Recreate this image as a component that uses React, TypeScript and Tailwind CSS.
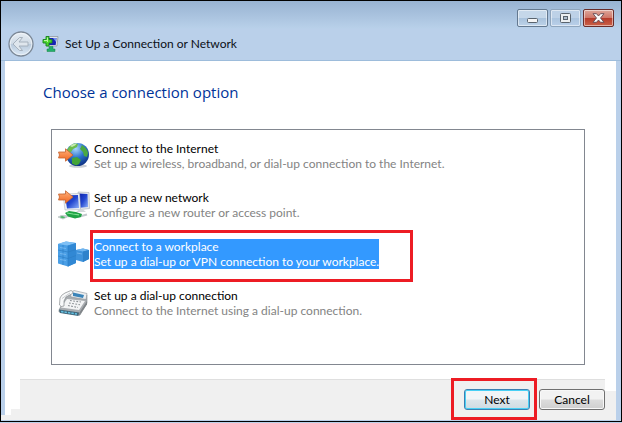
import type { ReactNode } from "react";

function Arrow({ y }: { y: number }) {
  return (
    <path
      transform={`translate(1 ${y})`}
      d="M.5 4h7V.8L15 7l-7.500 6.200V10h-7l1-3z"
      fill="url(#orange)"
      stroke="#c4622f"
      strokeWidth=".8"
      strokeLinejoin="round"
    />
  );
}

function GlobeIcon() {
  return (
    <svg width="34" height="34" viewBox="0 0 34 34" className="shrink-0" aria-hidden="true">
      <defs>
        <linearGradient id="orange" x1="0" y1="0" x2="0" y2="1">
          <stop offset="0" stopColor="#ffb27c" />
          <stop offset="1" stopColor="#f0641e" />
        </linearGradient>
        <radialGradient id="sea" cx=".42" cy=".25" r=".8">
          <stop offset="0" stopColor="#a9d8fb" />
          <stop offset=".5" stopColor="#2b72cc" />
          <stop offset="1" stopColor="#0b2a7c" />
        </radialGradient>
      </defs>
      <ellipse cx="21" cy="27" rx="9" ry="1.800" fill="#c9ced4" />
      <circle cx="20.500" cy="15.500" r="11.500" fill="url(#sea)" />
      <path d="M10 12q1-5 7-7.500l4 .5-1 3-4 2-2 3-4 2z" fill="#6cbd4c" />
      <path d="M13 7q3-3 7-2.500l-2 2-3 1.500z" fill="#c5ebb0" />
      <path d="M25 6q5 3 6 8l-1 4-3-1-1-4-3-3z" fill="#4aa843" />
      <path d="M15 19l5-1 4 3-2 4-3 1.500-4-2z" fill="#43a437" />
      <Arrow y={9} />
    </svg>
  );
}

function NetworkIcon() {
  return (
    <svg width="34" height="34" viewBox="0 0 34 34" className="shrink-0" aria-hidden="true">
      <defs>
        <linearGradient id="screen" x1="0" y1="0" x2="1" y2="1">
          <stop offset="0" stopColor="#0b1fa8" />
          <stop offset=".5" stopColor="#2448d0" />
          <stop offset="1" stopColor="#8fb2fa" />
        </linearGradient>
      </defs>
      <path d="M21 4l11 .5.500 16-9 1z" fill="#e6e9ed" stroke="#a7aeb6" strokeWidth=".6" />
      <path d="M22 5.500l8.500.5.500 13-8 .8z" fill="url(#screen)" />
      <path d="M6 6l16.500-.5 1 16-15.500.5z" fill="#eef1f4" stroke="#b2b9c0" strokeWidth=".6" />
      <path d="M8 7.500l13-.5 1 13-12 .5z" fill="url(#screen)" />
      <path d="M22 21.500h4l3 2.500h-10z" fill="#d3d7db" />
      <path d="M3 28.500l8-.5 10 1 9-2.500" stroke="#c3c8cd" strokeWidth="2" fill="none" />
      <path d="M8 25l4-2 7 1 6 2-1 3-6 1.500-7-2z" fill="#1fa345" />
      <path d="M10 25l6 1 6 .8" stroke="#7fe092" strokeWidth="1.200" fill="none" />
      <path d="M1 29l4-1.500 5 1.500-4 2z" fill="#4cb868" stroke="#c9ced2" strokeWidth="1" />
      <Arrow y={2} />
    </svg>
  );
}

function ServerIcon() {
  return (
    <svg width="34" height="34" viewBox="0 0 34 34" className="shrink-0" aria-hidden="true">
      <path d="M19 13l7-1.500 6 1.500v9l-6 3-7-2z" fill="#3f93dc" />
      <path d="M19 13l7-1.500 6 1.500-6 1.500z" fill="#70b5ef" />
      <path d="M26 14.500l6-1.500v9l-6 3z" fill="#2f82cb" />
      <path d="M1 7l8-2.500 10 1.500v20l-8 3.500-10-3z" fill="#4a9fe6" />
      <path d="M1 7l8-2.500 10 1.500-8 2.500z" fill="#7fc0f5" />
      <path d="M11 8.500l8-2.500v20l-8 3.500z" fill="#3188d4" />
      <path d="M1 13l10 2 8-2.500M1 19l10 2.500 8-3M11 8.500v21M6 8v20" fill="none" stroke="#2d7ec6" strokeWidth=".7" />
      <path d="M3 10.500l6 1M3 16.500l6 1M3 22.500l6 1M20 16l5 1" fill="none" stroke="#7cbdf3" strokeWidth=".8" />
    </svg>
  );
}

function PhoneIcon() {
  return (
    <svg width="34" height="34" viewBox="0 0 34 34" className="shrink-0" aria-hidden="true">
      <path d="M2 24l6-12 7-6 15 3v8l-7 12-21-3z" fill="#a9adb1" stroke="#85898d" strokeWidth=".6" />
      <path d="M13 7l4-2.500L30 7.500l-1 6-15-2.500z" fill="#eceef0" stroke="#8e9296" strokeWidth=".6" />
      <path d="M16 6.500l11 2.500-1 3-10-2z" fill="#3b84b8" />
      <path d="M10 13l18 2-6 9-18-2.500z" fill="#f3f4f5" />
      <path d="M13 14.500l11 1.500M12 17l11 1.800M11 19.500l10 2" stroke="#8d9297" strokeWidth="1.100" strokeDasharray="1.800 1.400" />
      <path d="M3 12q1-3 5-5l6-2.500q3 .5 1.500 3L9 11l-2 4v5q-3 1.500-4.500-1z" fill="#f8f9fa" stroke="#85898d" strokeWidth=".7" />
      <path d="M5 12.500l8-5.500" stroke="#c8ccd0" strokeWidth="1" />
      <path d="M2 23.500l20 3-.5 3.500L3 27z" fill="#3f6478" />
      <path d="M4 25.500l16 2.500" stroke="#63bfe0" strokeWidth="1.600" strokeDasharray="2.500 1" />
      <path d="M22.500 26.500L30 15v3.500L22 30z" fill="#7f8488" />
    </svg>
  );
}

function SetupIcon() {
  return (
    <svg width="17" height="18" viewBox="0 0 17 18" className="shrink-0" aria-hidden="true">
      <path d="M5 1.500h11l-1 9.500H5z" fill="#e1e6ea" stroke="#8f99a2" strokeWidth=".8" />
      <path d="M7 3h7.500l-.8 7H7z" fill="#1723b5" />
      <path d="M11 3h3.500l-.5 4z" fill="#7291ef" />
      <path d="M1 15.500h15v1H1z" fill="#d5dadf" />
      <path d="M7 11.500h4V14h2v2.500H5V14h2z" fill="#23b06a" stroke="#168249" strokeWidth=".5" />
      <path d="M4 1.500h3v3h3v3.500H7v3H4V8H1V4.500h3z" fill="#4cd42f" stroke="#15831d" strokeWidth=".9" />
      <path d="M5.500 2.500V7M2 5.500h4" stroke="#b9f79f" strokeWidth="1" />
    </svg>
  );
}

function BackIcon() {
  return (
    <svg width="26" height="26" viewBox="0 0 26 26" aria-hidden="true">
      <defs>
        <linearGradient id="disc" x1="0" y1="0" x2="0" y2="1">
          <stop offset="0" stopColor="#e9eff5" />
          <stop offset=".48" stopColor="#cfdae5" />
          <stop offset=".52" stopColor="#b9cadc" />
          <stop offset="1" stopColor="#dce9f6" />
        </linearGradient>
      </defs>
      <circle cx="13" cy="13" r="12" fill="url(#disc)" stroke="#7c8896" strokeWidth="1.300" />
      <circle cx="13" cy="13" r="10.800" fill="none" stroke="#f5f8fb" strokeWidth=".7" />
      <path d="M5 13l6.500-6.500h3L11 11h9v4h-9l3.500 4.500h-3z" fill="#dfe6ed" stroke="#a2adb9" strokeWidth=".9" strokeLinejoin="round" />
    </svg>
  );
}

const captionButton =
  "flex h-[18px] w-[31px] items-center justify-center rounded-[2px] border shadow-[inset_0_0_0_1px_rgba(255,255,255,0.5)]";

function TitleBar() {
  return (
    <header className="h-[60px] border-b border-[#9dbcdb] bg-[linear-gradient(#98b3d2,#b8d0e9_27px,#bad0ea_28px)]">
      <div className="flex justify-end gap-[2px] pt-2 pr-[7px]">
        <button type="button" aria-label="Minimize" className={`${captionButton} border-[#647990] bg-[linear-gradient(#c5d7e9_48%,#a9c2dc_52%,#bdd3e9)]`}>
          <svg width="13" height="7" viewBox="0 0 13 7" className="mt-1" aria-hidden="true">
            <rect x="1.500" y="1.500" width="10" height="4" rx="1" fill="#f5f5f5" stroke="#59636d" />
          </svg>
        </button>
        <button type="button" aria-label="Maximize" className={`${captionButton} border-[#8fa5bd] bg-[linear-gradient(#bdd1e7_48%,#abc4df_52%,#bad0e9)]`}>
          <svg width="11" height="10" viewBox="0 0 11 10" aria-hidden="true">
            <rect x=".5" y=".5" width="10" height="9" rx="1" fill="#eceff1" stroke="#59636d" />
            <rect x="3.500" y="3.500" width="4" height="3" fill="#aebdcd" stroke="#59636d" />
          </svg>
        </button>
        <button type="button" aria-label="Close" className={`${captionButton} border-[#692c2a] bg-[linear-gradient(#dda79b,#cf7769_48%,#b63b2b_52%,#cb6249)]`}>
          <svg width="13" height="10" viewBox="0 0 13 10" aria-hidden="true">
            <path d="M1 .7h3.500l2 2.300 2-2.300H12L8.500 5 12 9.300H8.500l-2-2.300-2 2.300H1L4.500 5z" fill="#fafafa" stroke="#624b54" strokeWidth=".9" />
          </svg>
        </button>
      </div>
      <div className="flex h-[34px] items-center pl-[7px]">
        <button type="button" aria-label="Back">
          <BackIcon />
        </button>
        <span className="ml-2">
          <SetupIcon />
        </span>
        <h1 className="ml-[6px] text-[12px] leading-[16px] text-[#0b0f16]">Set Up a Connection or Network</h1>
      </div>
    </header>
  );
}

type OptionProps = { icon: ReactNode; title: string; detail: string; selected?: boolean };

function Option({ icon, title, detail, selected = false }: OptionProps) {
  return (
    <li className="relative">
      <button type="button" aria-pressed={selected} className="flex h-[34px] w-full items-center gap-[3px] text-left text-[12px] leading-[15px]">
        {icon}
        <span className={selected ? "bg-[#3399ff] text-white" : ""}>
          <span className={selected ? "block" : "block text-black"}>{title}</span>
          <span className={selected ? "block" : "block text-[#838383]"}>{detail}</span>
        </span>
      </button>
      {selected && (
        <span className="pointer-events-none absolute -top-[7px] left-[33px] h-[52px] w-[323px] border-3 border-[#ed1c24]" />
      )}
    </li>
  );
}

const dialogButton = "h-[21px] w-[66px] rounded-[3px] border text-[12px] leading-[16px] text-black";

function Footer() {
  return (
    <footer className="flex h-[42px] items-end border-b border-[#bad0ea] bg-white">
      <div className="flex h-full w-1 items-end bg-[#bad0ea]">
        <div className="h-[5px] w-full bg-[#f0f0f0]" />
      </div>
      <div className="h-[5px] w-[6px] bg-[#f0f0f0]" />
      <div className="h-[11px] w-[9px] bg-[#f0f0f0]" />
      <div className="flex h-full flex-1 items-start justify-end gap-[9px] border-t border-[#dfdfdf] bg-[#f0f0f0] pt-[9px]">
        <div className="relative">
          <button type="button" className={`${dialogButton} block border-[#3c7fb1] bg-[linear-gradient(#f1f5f7_48%,#dce6eb_52%,#cddbe2)] shadow-[inset_0_0_0_1px_#48d0f5]`}>
            Next
          </button>
          <span className="pointer-events-none absolute -top-[11px] -left-[13px] h-[42px] w-[86px] border-3 border-[#ed1c24]" />
        </div>
        <button type="button" className={`${dialogButton} border-[#707070] bg-[linear-gradient(#f2f2f2_48%,#dddddd_52%,#cfcfcf)] shadow-[inset_0_0_0_1px_#f8f8f8]`}>
          Cancel
        </button>
      </div>
      <div className="h-[29px] w-[11px] bg-[#f0f0f0]" />
      <div className="h-full w-[5px] bg-[#bad0ea]" />
    </footer>
  );
}

export default function App() {
  return (
    <div className="min-h-screen bg-[#bad0ea] font-['Lato','Noto_Sans',sans-serif]">
      <div className="border border-black bg-[#bad0ea]">
        <TitleBar />
        <main className="ml-1 mr-[5px] bg-white pt-[20px] pr-[31px] pb-[14px] pl-[46px]">
          <h2 className="-ml-2 font-['Open_Sans','Noto_Sans',sans-serif] text-[15px] leading-[22px] text-[#003399]">
            Choose a connection option
          </h2>
          <ul className="mt-[26px] flex h-[236px] flex-col gap-[15px] border border-[#828790] pt-[9px] pl-[5px]">
            <Option icon={<GlobeIcon />} title="Connect to the Internet" detail="Set up a wireless, broadband, or dial-up connection to the Internet." />
            <Option icon={<NetworkIcon />} title="Set up a new network" detail="Configure a new router or access point." />
            <Option icon={<ServerIcon />} title="Connect to a workplace" detail="Set up a dial-up or VPN connection to your workplace." selected />
            <Option icon={<PhoneIcon />} title="Set up a dial-up connection" detail="Connect to the Internet using a dial-up connection." />
          </ul>
        </main>
        <Footer />
      </div>
    </div>
  );
}
